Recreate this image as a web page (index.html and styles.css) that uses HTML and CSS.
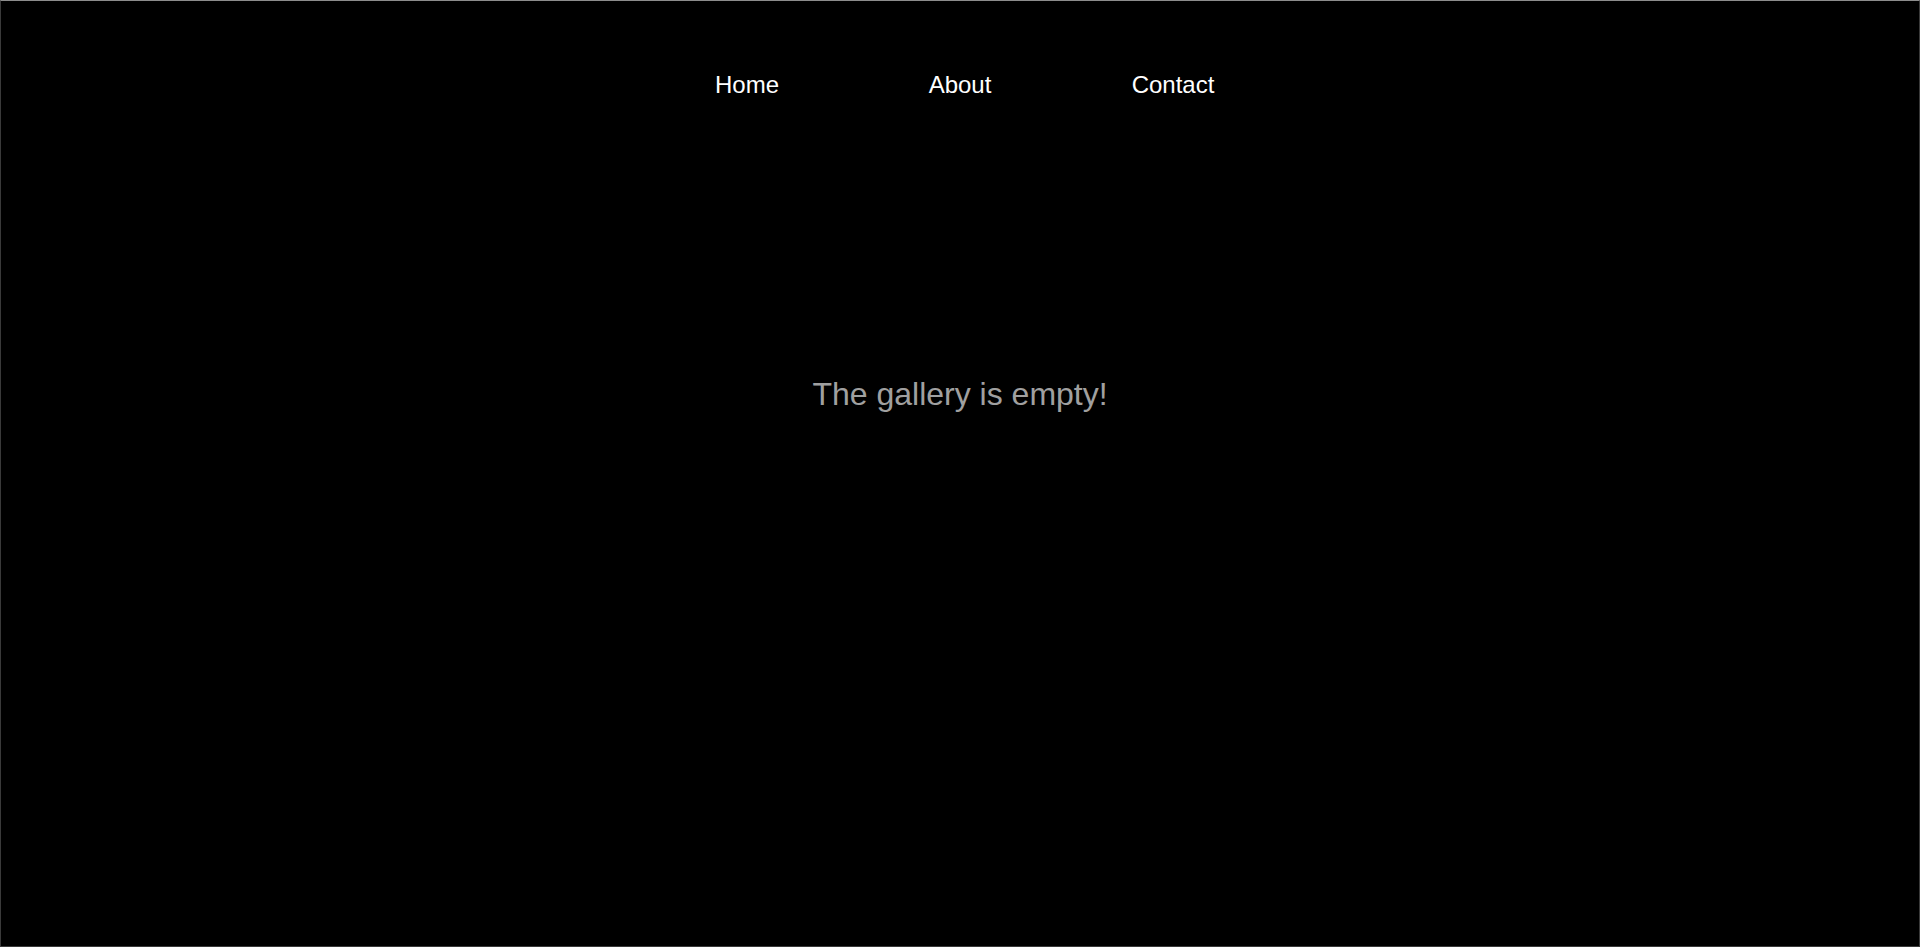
FILE: index.html
```html
<!DOCTYPE html>
<html lang="en">
<head>
<meta charset="utf-8">
<title>Gallery</title>
<link rel="stylesheet" href="styles.css">
</head>
<body>
<div class="page">
  <nav class="nav">
    <a class="nav-link" href="#">Home</a>
    <a class="nav-link" href="#">About</a>
    <a class="nav-link" href="#">Contact</a>
  </nav>
  <main class="gallery">
    <p class="empty">The gallery is empty!</p>
  </main>
</div>
</body>
</html>
```
FILE: styles.css
```css
html, body {
  margin: 0;
  padding: 0;
  background: #000;
}
.page {
  box-sizing: border-box;
  height: 947px;
  border: 1px solid #3a3a3a;
  border-top-color: #8c8c8c;
  background: #000;
  font-family: "Liberation Sans", Arial, Helvetica, sans-serif;
  display: flex;
  flex-direction: column;
  align-items: center;
}
.nav {
  margin-top: 70px;
  display: grid;
  grid-template-columns: repeat(3, 213px);
  justify-items: center;
}
.nav-link {
  color: #fff;
  text-decoration: none;
  font-size: 24px;
  line-height: 27px;
}
.gallery {
  margin-top: 278px;
}
.empty {
  margin: 0;
  color: #a0a0a0;
  font-size: 32px;
  line-height: 37px;
}
```
